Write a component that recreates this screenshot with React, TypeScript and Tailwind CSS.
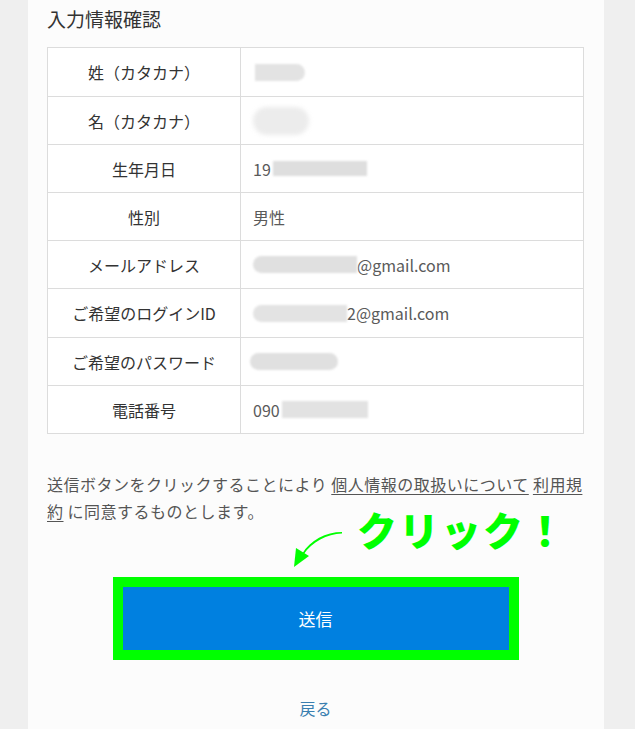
import React from "react";

const font = { fontFamily: '"Noto Sans CJK JP", "Noto Sans", sans-serif' } as React.CSSProperties;

function Row({ label, tall, children }: { label: string; tall?: boolean; children: React.ReactNode }) {
  return (
    <div className={tall ? "flex h-[49px] border-b border-[#dcdcdc]" : "flex h-[48px] border-b border-[#dcdcdc]"}>
      <div className="w-[193px] shrink-0 border-r border-[#dcdcdc] flex items-center justify-center text-[16px] text-[#333]">
        {label}
      </div>
      <div className="flex-1 flex items-center pl-[12px] text-[16px] text-[#5a5a5a]">{children}</div>
    </div>
  );
}

export default function App() {
  return (
    <div className="min-h-[729px] w-full bg-[#efefef] flex" style={font}>
      <div className="relative ml-[28px] w-[576px] bg-[#fcfcfc] pl-[19px] pr-[20px] pt-[5px] pb-[8px]">
        <h1 className="text-[19px] leading-[28px] text-[#333] font-normal mb-[14px]">入力情報確認</h1>

        <div className="border border-b-0 border-[#dcdcdc] bg-white">
          <Row label="姓（カタカナ）" tall>
            <div className="ml-[2px] w-[50px] h-[17px] rounded-r-full bg-[#e3e3e3] blur-[1px]" />
          </Row>
          <Row label="名（カタカナ）">
            <div className="w-[56px] h-[28px] rounded-full bg-[#ececec] blur-[2px]" />
          </Row>
          <Row label="生年月日">
            <span>19</span>
            <div className="ml-[2px] w-[94px] h-[15px] bg-[#dedede] blur-[1px]" />
          </Row>
          <Row label="性別">
            <span>男性</span>
          </Row>
          <Row label="メールアドレス">
            <div className="w-[104px] h-[17px] rounded-l-full bg-[#e0e0e0] blur-[1px]" />
            <span>@gmail.com</span>
          </Row>
          <Row label="ご希望のログインID" tall>
            <div className="w-[94px] h-[17px] rounded-l-full bg-[#e3e3e3] blur-[1px]" />
            <span>2@gmail.com</span>
          </Row>
          <Row label="ご希望のパスワード">
            <div className="-ml-[3px] w-[88px] h-[17px] rounded-full bg-[#e0e0e0] blur-[1px]" />
          </Row>
          <Row label="電話番号">
            <span>090</span>
            <div className="ml-[2px] w-[86px] h-[17px] bg-[#e2e2e2] blur-[1px]" />
          </Row>
        </div>

        <p className="mt-[37px] text-[16px] leading-[27px] text-[#555] tracking-[0.5px]">
          送信ボタンをクリックすることにより <a className="underline underline-offset-[3px]">個人情報の取扱いについて</a>{" "}
          <a className="underline underline-offset-[3px]">利用規約</a> に同意するものとします。
        </p>

        <div className="mt-[52px] flex justify-center">
          <div className="w-[406px] h-[83px] border-[10px] border-[#00ff00] bg-[#0080e0] flex items-center justify-center">
            <span className="text-white text-[17px]">送信</span>
          </div>
        </div>

        <div className="mt-[36px] flex justify-center">
          <span className="text-[16px] leading-[24px] text-[#3a7fb0]">戻る</span>
        </div>

        <div className="absolute left-[329px] top-[505px] text-[40px] leading-[48px] font-black text-[#00ff00] tracking-[2px]">
          クリック！
        </div>
        <svg className="absolute left-[232px] top-[526px]" width="90" height="46" viewBox="0 0 90 46">
          <path
            d="M82 6 C 66 6, 50 14, 42 28 L 43.5 28.5 C 52 16, 67 8, 82 7.5 Z"
            fill="#00ff00"
          />
          <path d="M34 41 L 36 22 L 49 30 Z" fill="#00ff00" />
        </svg>
      </div>
    </div>
  );
}
